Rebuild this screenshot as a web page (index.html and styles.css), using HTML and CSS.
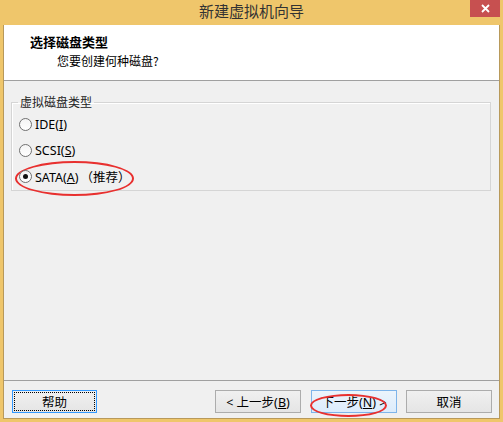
FILE: index.html
```html
<!DOCTYPE html>
<html lang="zh-CN">
<head>
    <meta charset="UTF-8">
    <title>新建虚拟机向导</title>
    <link rel="stylesheet" href="styles.css">
</head>
<body>
    <div class="window">
        <div class="titlebar">
            <span></span>
            <span class="title">新建虚拟机向导</span>
            <button class="close" title="关闭">
                <svg width="9" height="9" viewBox="0 0 9 9"><path d="M1 1 L8 8 M8 1 L1 8" stroke="#fff" stroke-width="1.8"/></svg>
            </button>
        </div>

        <div class="frame">
            <div class="header">
                <div class="heading">选择磁盘类型</div>
                <div class="subheading">您要创建何种磁盘?</div>
            </div>

            <div class="content">
                <fieldset class="group">
                    <legend>虚拟磁盘类型</legend>
                    <label class="option"><span class="radio"></span><span>IDE(<u>I</u>)</span></label>
                    <label class="option"><span class="radio"></span><span>SCSI(<u>S</u>)</span></label>
                    <label class="option marked"><span class="radio checked"></span><span>SATA(<u>A</u>)<span class="note">（推荐）</span></span></label>
                </fieldset>
            </div>

            <div class="footer">
                <button class="btn focused">帮助</button>
                <span class="spacer"></span>
                <button class="btn">&lt; 上一步(<u>B</u>)</button>
                <button class="btn default marked">下一步(<u>N</u>) &gt;</button>
                <button class="btn">取消</button>
            </div>
        </div>
    </div>
</body>
</html>
```
FILE: styles.css
```css
body {
    margin: 0;
    font-family: "Noto Sans", "Noto Sans CJK SC", sans-serif;
    font-size: 12px;
    color: #000;
    background: #efc66b;
}

.window {
    width: 503px;
    height: 422px;
    display: flex;
    flex-direction: column;
    background: #efc66b;
    padding: 0 3px 3px 3px;
    box-sizing: border-box;
}

.titlebar {
    height: 25px;
    display: grid;
    grid-template-columns: 1fr auto 1fr;
    align-items: start;
}

.title {
    font-family: "Noto Sans CJK SC", sans-serif;
    font-size: 15px;
    line-height: 22px;
    color: #333;
}

.close {
    justify-self: end;
    width: 30px;
    height: 17px;
    border: none;
    padding: 0;
    background: #c75050;
    display: flex;
    align-items: center;
    justify-content: center;
}

.frame {
    flex: 1;
    display: flex;
    flex-direction: column;
    background: #f0f0f0;
    border: 1px solid #b8995a;
    border-top: none;
}

.header {
    height: 56px;
    background: #fff;
    border-bottom: 1px solid #a0a0a0;
    padding: 8px 0 0 26px;
    box-sizing: border-box;
}

.heading {
    font-family: "Noto Sans CJK SC", sans-serif;
    font-weight: bold;
    font-size: 13px;
    line-height: 17px;
}

.subheading {
    font-family: "Noto Sans CJK SC", sans-serif;
    margin: 2px 0 0 27px;
    line-height: 17px;
}

.content {
    flex: 1;
    padding: 13px 8px 0 7px;
}

.group {
    margin: 0;
    padding: 1px 0 1px 7px;
    border: 1px solid #d5d5d5;
    box-shadow: inset 1px 1px 0 #fff;
}

.group legend {
    font-family: "Noto Sans CJK SC", sans-serif;
    margin-left: -1px;
    padding: 0 2px;
    line-height: 16px;
    color: #222;
}

.option {
    position: relative;
    height: 26px;
    display: flex;
    align-items: center;
    gap: 3px;
    font-size: 12.5px;
}

.radio {
    width: 11px;
    height: 11px;
    border: 1px solid #707070;
    border-radius: 50%;
    background: linear-gradient(#f4f4f4, #fff);
    position: relative;
}

.radio.checked::after {
    content: "";
    position: absolute;
    left: 3px;
    top: 3px;
    width: 5px;
    height: 5px;
    border-radius: 50%;
    background: #111;
}

.note {
    font-family: "Noto Sans CJK SC", sans-serif;
    margin-left: 2px;
}

/* red annotation ovals */
.option.marked::before {
    content: "";
    position: absolute;
    left: -4px;
    top: -2px;
    width: 115px;
    height: 31px;
    border: 2px solid #e8302f;
    border-radius: 50%;
}

.footer {
    height: 38px;
    border-top: 1px solid #a0a0a0;
    display: flex;
    align-items: flex-start;
    padding: 9px 7px 0 8px;
    box-sizing: border-box;
    gap: 9px;
}

.spacer {
    flex: 1;
}

.btn {
    width: 86px;
    height: 23px;
    font-family: "Noto Sans", "Noto Sans CJK SC", sans-serif;
    font-size: 12.5px;
    color: #000;
    border: 1px solid #acacac;
    background: linear-gradient(#f0f0f0, #e5e5e5);
    padding: 0;
    position: relative;
}

.btn.focused {
    width: 85px;
    border-color: #3399ff;
    outline: 1px dotted #000;
    outline-offset: -3px;
}

.btn.default {
    border-color: #7eb4ea;
    background: linear-gradient(#ecf4fc, #dcecfc);
    margin-left: 1px;
}

.btn.marked::before {
    content: "";
    position: absolute;
    left: -2px;
    top: 3px;
    width: 73px;
    height: 19px;
    border: 2px solid #e8302f;
    border-radius: 50%;
}
```
